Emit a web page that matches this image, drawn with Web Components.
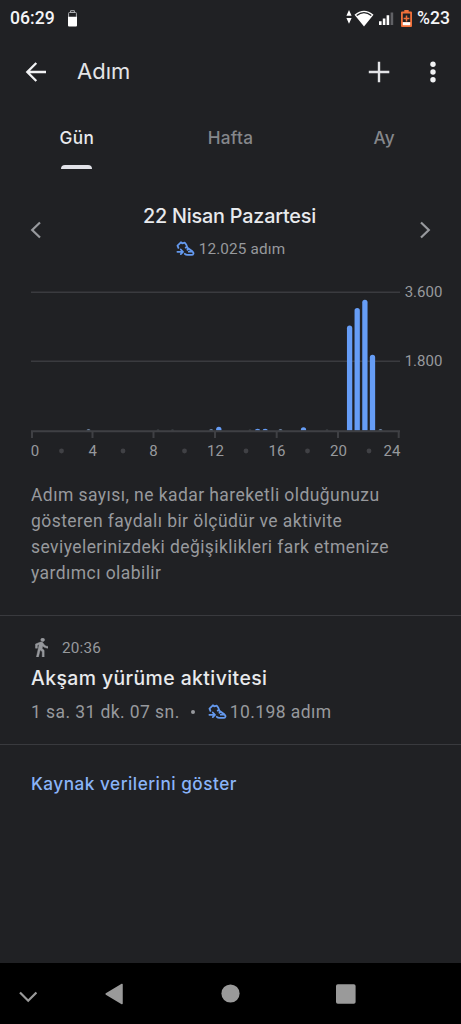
<!DOCTYPE html>
<html lang="tr">
<head>
<meta charset="utf-8">
<title>Adım</title>
<style>
html,body{margin:0;background:#202124}
body{font-family:Roboto,"Liberation Sans",sans-serif;color:#97999d;width:461px;height:1024px;overflow:hidden}
</style>
</head>
<body>
<fit-screen></fit-screen>
<script>
const define=(name,html,setup)=>customElements.define(name,class extends HTMLElement{
  connectedCallback(){
    if(this.shadowRoot)return;
    const root=this.attachShadow({mode:'open'});
    const t=document.createElement('template');
    t.innerHTML=html;
    root.append(t.content.cloneNode(true));
    if(setup)setup(this,root);
  }
});

define('status-bar',`
<style>
:host{display:flex;align-items:center;height:37px;padding:0 10px;color:#f4f5f7;font:500 17.6px/37px Roboto,sans-serif}
.gap{flex:1}
svg{display:block;flex:none}
.time{width:46px;white-space:nowrap}
</style>
<span class="time">06:29</span>
<svg style="margin-left:12px;margin-top:-1px" width="9" height="17" viewBox="0 0 9 17"><path d="M2.6 2.5V.7h3.8v1.8M.6 7V3.3q0-.8.8-.8h6.2q.8 0 .8.8V7" fill="none" stroke="#aeb0b3" stroke-width="1"/><path d="M0 6.7h9V15.500q0 1-1 1H1q-1 0-1-1z" fill="#fff"/></svg>
<span class="gap"></span>
<svg style="margin-top:-3px" width="6" height="14" viewBox="0 0 6 14"><path d="M3 0 5.600 5.800H.4zM3 13.700 .4 7.900H5.600z" fill="#fff"/></svg>
<svg style="margin-left:2px;margin-top:-1px" width="20" height="17" viewBox="0 0 20 17"><path d="M.5 4.700Q10-3.200 19.500 4.700L10 16.500z" fill="#fff"/><path d="M2.700 5.600Q10-.2 17.300 5.600" fill="none" stroke="#202124" stroke-width="1.300"/></svg>
<svg style="margin-left:5px" width="15" height="15" viewBox="0 0 15 15"><path d="M0 10.200h2.600V14H0zM3.800 7.500h2.600V14H3.800zM7.600 4.300h2.600V14H7.600z" fill="#fff"/><path d="M11.600 1.500h2.600V14h-2.600z" fill="#606165"/></svg>
<svg style="margin-left:7px;margin-right:5px;margin-top:-1px" width="11" height="17" viewBox="0 0 11 17"><path d="M3.300 0h4.400v1.600H10q1 0 1 1V16q0 1-1 1H1q-1 0-1-1V2.600q0-1 1-1h2.300z" fill="#f0703a"/><path d="M1.800 3.500h7.400v8.500H1.800z" fill="#202124"/><path d="M5.500 5.500v6M2.600 8.500h5.800" stroke="#f0703a" stroke-width="1.500"/><path d="M1.800 12.200h7.400v3H1.800z" fill="#fff"/></svg>
<span style="margin-right:1px">%23</span>`);

define('app-bar',`
<style>
:host{display:flex;align-items:center;height:69px;padding:0 23px 2px 25px;color:#e3e4e7}
h1{margin:0 0 0 30px;flex:1;font:400 22px/69px Inter,sans-serif;letter-spacing:0}
svg{display:block}
</style>
<svg width="22" height="22" viewBox="0 0 22 22"><path d="M21 11H2.500M11.300 2 2.300 11l9 9" fill="none" stroke="#f1f2f4" stroke-width="2.300"/></svg>
<h1>Adım</h1>
<svg width="22" height="22" viewBox="0 0 22 22"><path d="M11 .8v20.500M.8 11h20.500" stroke="#e3e4e7" stroke-width="2.400"/></svg>
<svg style="margin-left:38px" width="10" height="22" viewBox="0 0 10 22"><g fill="#f1f2f4"><circle cx="5" cy="3.300" r="2.700"/><circle cx="5" cy="11" r="2.700"/><circle cx="5" cy="18.700" r="2.700"/></g></svg>`);

define('tab-item',`
<style>
:host{display:flex;flex-direction:column;align-items:center;flex:1;font:500 17.200px/60px Inter,sans-serif;letter-spacing:.3px;color:#85878b}
:host([selected]){color:#e8eaed}
i{display:none;width:31px;height:4px;margin-top:-3px;border-radius:4px 4px 0 0;background:#e1e2e8}
:host([selected]) i{display:block}
</style><slot></slot><i></i>`);

define('tab-bar',`
<style>:host{display:flex;height:84px}</style>
<tab-item selected>Gün</tab-item><tab-item>Hafta</tab-item><tab-item>Ay</tab-item>`);

define('shoe-icon',`
<style>:host{display:block;width:19px;height:16px;flex:none}svg{display:block}</style>
<svg width="19" height="16" viewBox="0 0 19 16" fill="none" stroke="#6499ee" stroke-width="1.800" stroke-linejoin="round" stroke-linecap="round"><path d="M2.400 6.900 1.500 4.600 4.900 1.300 6.200 2.300 8.800 1.700 10.300 3.800 11.400 6.700 16.300 10.300Q18 11.800 17.300 13 17 13.900 15.500 13.900H11.500Q9.800 13.900 8.800 12.800"/><path d="M1.400 10.800h5.400M4.800 8.500 7 10.800 4.800 13.100M9.700 6.600l1-.5M11.400 8.700l.9-.6M12.800 10.700h3.200"/></svg>`);

define('day-header',`
<style>
:host{display:flex;align-items:center;height:76px;padding:0 29px}
svg{display:block}
section{flex:1;text-align:center;padding-top:5px}
h2{margin:0 1px 0 -1px;font:500 19.800px/31px Inter,sans-serif;letter-spacing:-.2px;color:#e8eaed}
p{display:flex;justify-content:center;align-items:center;gap:4px;margin:1px 0 0;font-size:15.300px;line-height:32px;letter-spacing:.15px}
</style>
<svg width="13" height="18" viewBox="0 0 13 18"><path d="M11 1.500 3.200 9l7.800 7.500" fill="none" stroke="#97999d" stroke-width="2.200"/></svg>
<section><h2>22 Nisan Pazartesi</h2><p><shoe-icon></shoe-icon><span>12.025 adım</span></p></section>
<svg width="13" height="18" viewBox="0 0 13 18"><path d="M2 1.500 9.800 9 2 16.500" fill="none" stroke="#97999d" stroke-width="2.200"/></svg>`);

define('step-chart',`
<style>:host{display:block;height:200px}svg{display:block}text{font:400 15px Roboto,sans-serif;fill:#97999d}</style>
<svg width="461" height="200" viewBox="0 268 461 200"></svg>`,(el,root)=>{
  let s='<path d="M31 292.200H400M31 361.300H400" stroke="#3a3b3f" stroke-width="1.500"/>';
  const bar=(x,top,w=5.300)=>{const r=Math.min(w/2,430.500-top);return `<path d="M${x-w/2} 430.500V${top+r}Q${x-w/2} ${top} ${x} ${top}Q${x+w/2} ${top} ${x+w/2} ${top+r}V430.500z"/>`};
  s+='<g fill="#669df6">'+[[349.600,325.500],[357.200,308],[364.900,299.700],[372.500,354.800],[218.800,426.700],[303.500,427.300],[257.600,428.700],[265.200,428.700]].map(b=>bar(...b)).join('')+'</g>';
  s+='<g fill="#6f88a8">'+[88.500,211.200,280.500,380.500].map(x=>bar(x,429,4)).join('')+'</g>';
  s+='<g fill="#4a5058">'+[158,172.500,250,327].map(x=>bar(x,429.500,3)).join('')+'</g>';
  s+='<path d="M31 431.300H400M32 431V438M92.500 431V438M153.500 431V438M215 431V438M276.700 431V438M338 431V438M398.700 431V438" fill="none" stroke="#3f4044" stroke-width="2"/>';
  [[35,0],[92.700,4],[153.500,8],[215.500,12],[277,16],[338.500,20],[392,24]].forEach(([x,v])=>s+=`<text x="${x}" y="456.300" text-anchor="middle">${v}</text>`);
  [61.500,123,184.500,246,307.500,369].forEach(x=>s+=`<circle cx="${x}" cy="451" r="2.400" fill="#404145"/>`);
  s+='<text x="404.700" y="297.400" >3.600</text><text x="404.700" y="366.400">1.800</text>';
  root.querySelector('svg').innerHTML=s;
});

define('info-text',`
<style>:host{display:block;height:133px;padding:13.500px 31px 0;box-sizing:content-box;font-size:17.500px;line-height:26.300px;letter-spacing:.43px;white-space:nowrap}</style><slot></slot>`);

define('activity-card',`
<style>
:host{display:block;border:solid #393a3e;border-width:1.500px 0;padding:0 31px;box-sizing:border-box;height:130px}
.t{display:flex;align-items:center;height:30px;padding-top:17px;font-size:15.300px;letter-spacing:.2px}
.t svg{margin:-1px 14px 0 4px}
h3{margin:0;font:500 19.400px/30px Inter,sans-serif;letter-spacing:.42px;color:#e8eaed}
.s{display:flex;align-items:center;margin-top:2px;font-size:17.500px;line-height:35px;letter-spacing:.42px;white-space:nowrap}
.s b{width:4px;height:4px;border-radius:2px;background:#97999d;margin:0 13px 0 11px}
shoe-icon{margin-right:3px}
</style>
<div class="t"><svg width="13" height="19" viewBox="5.500 1.500 13.500 21.500" preserveAspectRatio="none"><path fill="#97999d" stroke="#97999d" stroke-width=".5" d="M13.500 5.500c1.100 0 2-.9 2-2s-.9-2-2-2-2 .9-2 2 .9 2 2 2zM9.800 8.900L7 23h2.100l1.800-8 2.100 2v6h2v-7.500l-2.100-2 .6-3C14.800 12 16.800 13 19 13v-2c-1.900 0-3.500-1-4.300-2.400l-1-1.600c-.4-.6-1-1-1.700-1-.3 0-.5.1-.8.1L6 8.300V13h2V9.600l1.800-.7"/></svg>20:36</div>
<h3>Akşam yürüme aktivitesi</h3>
<div class="s"><span>1 sa. 31 dk. 07 sn.</span><b></b><shoe-icon></shoe-icon><span>10.198 adım</span></div>`);

define('source-link',`
<style>:host{display:block;flex:1;padding:22px 31px 0;font:500 17.200px/34px Inter,sans-serif;letter-spacing:.5px;color:#8ab4f8}</style><slot></slot>`);

define('nav-bar',`
<style>:host{display:flex;align-items:center;height:61px;background:#000}svg{display:block}</style>
<svg style="margin:6px 0 0 19px" width="18" height="12" viewBox="0 0 18 12"><path d="M1 1.500 9.200 9.800 17.400 1.500" fill="none" stroke="#9a9a9a" stroke-width="2.200"/></svg>
<svg style="margin-left:68px" width="19" height="22" viewBox="0 0 19 22"><path d="M17 1.500V20.500L1.200 11z" fill="#9a9a9a" stroke="#9a9a9a" stroke-width="1.500" stroke-linejoin="round"/></svg>
<svg style="margin-left:97px" width="19" height="19" viewBox="0 0 19 19"><circle cx="9.500" cy="9.500" r="9.100" fill="#9a9a9a"/></svg>
<svg style="margin-left:96px" width="20" height="20" viewBox="0 0 20 20"><rect x="0" y=".3" width="19.600" height="19.400" rx="1.800" fill="#9a9a9a"/></svg>`);

define('fit-screen',`
<style>:host{display:flex;flex-direction:column;height:1024px;width:461px;background:#202124}</style>
<status-bar></status-bar><app-bar></app-bar><tab-bar></tab-bar><day-header></day-header><step-chart></step-chart>
<info-text>Adım sayısı, ne kadar hareketli olduğunuzu<br>gösteren faydalı bir ölçüdür ve aktivite<br>seviyelerinizdeki değişiklikleri fark etmenize<br>yardımcı olabilir</info-text>
<activity-card></activity-card>
<source-link>Kaynak verilerini göster</source-link>
<nav-bar></nav-bar>`);
</script>
</body>
</html>
